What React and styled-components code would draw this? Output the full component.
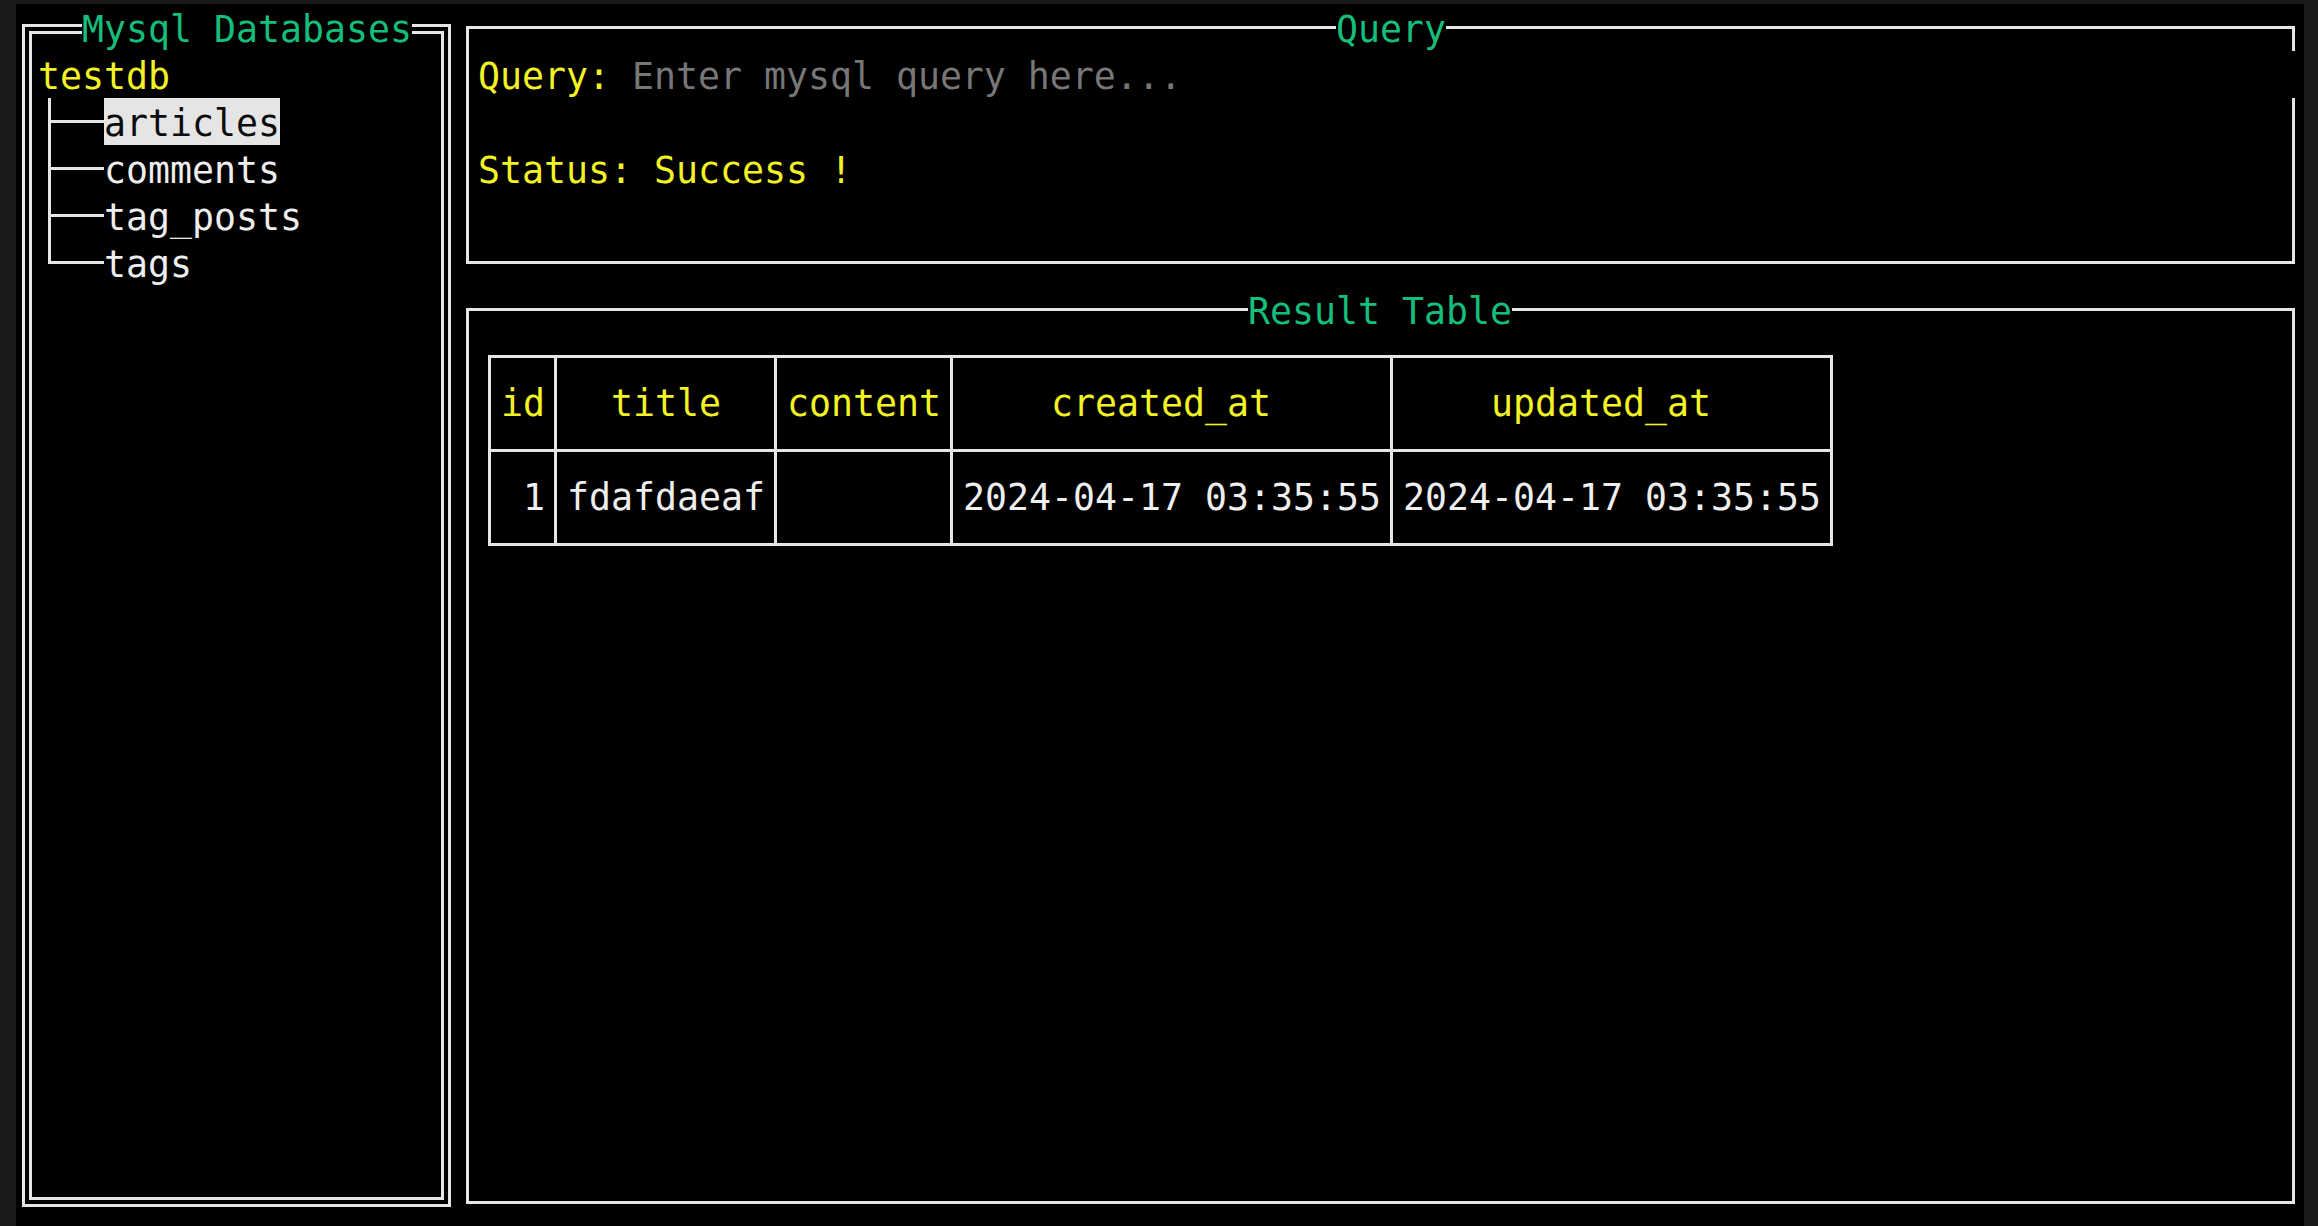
import React from 'react';
import styled, { createGlobalStyle } from 'styled-components';

// terminal cell size in px
const CW = 22;
const LH = 47;
// line box a bit taller than the cell so glyphs sit like the terminal's
const TEXT_LH = 51;

const LINE = '#e6e6e6';
const GREEN = '#15bf7b';
const YELLOW = '#f2f224';
const WHITE = '#eeeeee';
const GREY = '#777777';

const GlobalStyle = createGlobalStyle`
  html, body {
    margin: 0;
    padding: 0;
    background: #1a1a1a;
    overflow: hidden;
  }
  body {
    font-family: "DejaVu Sans Mono", "Liberation Mono", monospace;
    font-size: 36.54px;
    line-height: ${TEXT_LH}px;
    color: ${WHITE};
  }
`;

const Screen = styled.div`
  margin: 4px 0 0 16px;
  width: ${104 * CW}px;
  height: ${26 * LH}px;
  background: #000;
  display: flex;
`;

const LeftPane = styled.div`
  position: relative;
  width: ${20 * CW}px;
  flex: none;
  display: flex;
`;

const DoubleOuter = styled.div`
  flex: 1;
  display: flex;
  margin: 20px 5px 19px 6px;
  padding: 4px;
  border: 3px solid ${LINE};
`;

const DoubleInner = styled.div`
  flex: 1;
  border: 3px solid ${LINE};
  padding: 17px 0 0 6px;
`;

const PaneTitle = styled.span`
  position: absolute;
  top: 0;
  left: ${p => p.$col * CW}px;
  height: ${LH}px;
  overflow: hidden;
  background: #000;
  color: ${GREEN};
  white-space: pre;
  z-index: 1;
`;

const DbName = styled.div`
  height: ${LH}px;
  color: ${YELLOW};
`;

const TreeRow = styled.div`
  display: flex;
  height: ${LH}px;
`;

const Branch = styled.span`
  position: relative;
  flex: none;
  width: ${3 * CW}px;

  &::before {
    content: '';
    position: absolute;
    left: 10px;
    top: 0;
    width: 3px;
    height: ${p => (p.$last ? `${LH / 2 + 1}px` : '100%')};
    background: ${LINE};
  }
  &::after {
    content: '';
    position: absolute;
    left: 10px;
    right: 0;
    top: ${LH / 2 - 1.5}px;
    height: 3px;
    background: ${LINE};
  }
`;

const TreeLabel = styled.span`
  display: inline-block;
  height: ${LH}px;
  overflow: hidden;
  white-space: pre;
  color: ${p => (p.$selected ? '#0c0c0c' : WHITE)};
  background: ${p => (p.$selected ? '#e5e5e5' : 'transparent')};
`;

const RightPane = styled.div`
  width: ${84 * CW}px;
  flex: none;
  display: flex;
  flex-direction: column;
`;

const Section = styled.div`
  position: relative;
  flex: none;
  height: ${p => p.$rows * LH}px;
  display: flex;
`;

const Box = styled.div`
  flex: 1;
  display: flex;
  flex-direction: column;
  align-items: ${p => p.$align || 'stretch'};
  margin: 22px 9px 22px 10px;
  border: 3px solid ${LINE};
  padding: ${p => p.$pad};
`;

const InputLine = styled.div`
  height: ${LH}px;
  margin-right: -3px;
  background: #000;
  white-space: pre;
`;

const Prompt = styled.span`
  color: ${YELLOW};
`;

const Placeholder = styled.span`
  color: ${GREY};
`;

const StatusLine = styled.div`
  height: ${LH}px;
  margin-top: ${LH}px;
  color: ${YELLOW};
  white-space: pre;
`;

const ResultGrid = styled.div`
  display: grid;
  grid-template-columns: ${p => p.$widths.map(w => `${w * CW + 19}px`).join(' ')};
  grid-auto-rows: ${2 * LH - 3}px;
  gap: 3px;
  padding: 3px;
  background: ${LINE};
`;

const Cell = styled.div`
  padding: 20px 9px 0 10px;
  background: #000;
  white-space: pre;
  overflow: hidden;
  color: ${p => (p.$head ? YELLOW : WHITE)};
`;

const tables = ['articles', 'comments', 'tag_posts', 'tags'];

const columns = [
  { name: 'id', w: 2, right: true },
  { name: 'title', w: 9 },
  { name: 'content', w: 7 },
  { name: 'created_at', w: 19 },
  { name: 'updated_at', w: 19 },
];

const rows = [
  { id: '1', title: 'fdafdaeaf', content: '', created_at: '2024-04-17 03:35:55', updated_at: '2024-04-17 03:35:55' },
];

const center = (text, w) => ' '.repeat(Math.floor((w - text.length) / 2)) + text;
const titleCol = (text, cols) => Math.ceil((cols - text.length) / 2);

export default function App() {
  return (
    <>
      <GlobalStyle />
      <Screen>
        <LeftPane>
          <PaneTitle $col={titleCol('Mysql Databases', 20)}>Mysql Databases</PaneTitle>
          <DoubleOuter>
            <DoubleInner>
              <DbName>testdb</DbName>
              {tables.map((t, i) => (
                <TreeRow key={t}>
                  <Branch $last={i === tables.length - 1} />
                  <TreeLabel $selected={i === 0}>{t}</TreeLabel>
                </TreeRow>
              ))}
            </DoubleInner>
          </DoubleOuter>
        </LeftPane>

        <RightPane>
          <Section $rows={6}>
            <PaneTitle $col={titleCol('Query', 84)}>Query</PaneTitle>
            <Box $pad="22px 0 0 9px">
              <InputLine>
                <Prompt>Query: </Prompt>
                <Placeholder>Enter mysql query here...</Placeholder>
              </InputLine>
              <StatusLine>Status: Success !</StatusLine>
            </Box>
          </Section>

          <Section $rows={20}>
            <PaneTitle $col={titleCol('Result Table', 84)}>Result Table</PaneTitle>
            <Box $pad="44px 0 0 19px" $align="flex-start">
              <ResultGrid $widths={columns.map(c => c.w)}>
                {columns.map(c => (
                  <Cell key={c.name} $head>{center(c.name, c.w)}</Cell>
                ))}
                {rows.map((r, ri) =>
                  columns.map(c => (
                    <Cell key={`${ri}-${c.name}`}>
                      {c.right ? r[c.name].padStart(c.w) : r[c.name]}
                    </Cell>
                  ))
                )}
              </ResultGrid>
            </Box>
          </Section>
        </RightPane>
      </Screen>
    </>
  );
}
